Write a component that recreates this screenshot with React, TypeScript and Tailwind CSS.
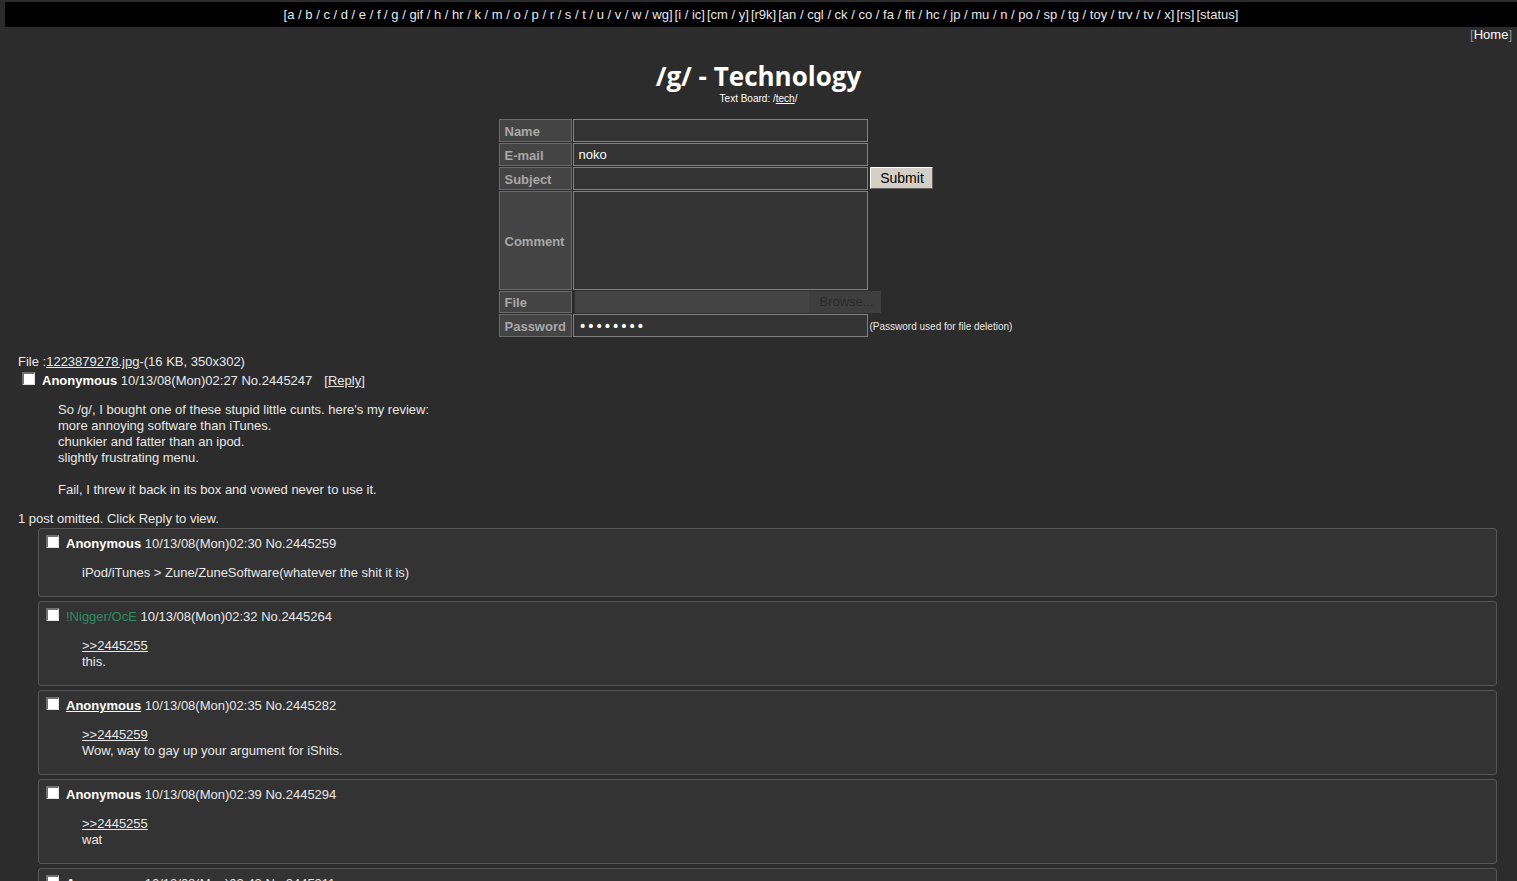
import React from "react";

const boardGroups: string[][] = [
  ["a", "b", "c", "d", "e", "f", "g", "gif", "h", "hr", "k", "m", "o", "p", "r", "s", "t", "u", "v", "w", "wg"],
  ["i", "ic"],
  ["cm", "y"],
  ["r9k"],
  ["an", "cgl", "ck", "co", "fa", "fit", "hc", "jp", "mu", "n", "po", "sp", "tg", "toy", "trv", "tv", "x"],
  ["rs"],
  ["status"],
];

type Post = {
  id: string;
  name: string;
  time: string;
  trip?: boolean;
  email?: boolean;
  quote?: string;
  text: string;
};

const replies: Post[] = [
  { id: "2445259", name: "Anonymous", time: "02:30", text: "iPod/iTunes > Zune/ZuneSoftware(whatever the shit it is)" },
  { id: "2445264", name: "!Nigger/OcE", trip: true, time: "02:32", quote: "2445255", text: "this." },
  { id: "2445282", name: "Anonymous", email: true, time: "02:35", quote: "2445259", text: "Wow, way to gay up your argument for iShits." },
  { id: "2445294", name: "Anonymous", time: "02:39", quote: "2445255", text: "wat" },
  { id: "2445311", name: "Anonymous", time: "02:43", text: "" },
];

function BoardNav() {
  return (
    <nav aria-label="Boards" className="ml-[5px] flex flex-wrap justify-center gap-x-0.5 bg-black py-1 leading-[17px]">
      {boardGroups.map((group) => (
        <span key={group[0]}>
          [
          {group.map((b, i) => (
            <React.Fragment key={b}>
              {i > 0 && " / "}
              <a href={`#${b}`}>{b}</a>
            </React.Fragment>
          ))}
          ]
        </span>
      ))}
    </nav>
  );
}

function Row({ id, label, size, children }: { id: string; label: string; size: string; children: React.ReactNode }) {
  return (
    <div className="flex gap-px">
      <label
        htmlFor={id}
        className={`flex w-[73px] items-center border border-[#6a6a6a] bg-[#444444] pt-0.5 pl-[5px] font-bold text-[#a8a8a8] ${size}`}
      >
        {label}
      </label>
      {children}
    </div>
  );
}

const field = "w-[295px] border border-[#808080] bg-[#333333] px-[5px] text-white outline-none";

function PostForm() {
  return (
    <form className="mx-auto mt-3.5 flex w-[520px] flex-col gap-px" onSubmit={(e) => e.preventDefault()}>
      <Row id="name" label="Name" size="h-[23px]">
        <input id="name" type="text" className={field} />
      </Row>
      <Row id="email" label="E-mail" size="h-[23px]">
        <input id="email" type="text" defaultValue="noko" className={field} />
      </Row>
      <Row id="subject" label="Subject" size="h-[23px]">
        <input id="subject" type="text" className={field} />
        <button
          type="submit"
          className="ml-px h-[22px] w-[63px] border border-t-white border-r-[#606060] border-b-[#606060] border-l-white bg-[#d4d0c8] pl-0.5 text-[14px] leading-[18px] text-black"
        >
          Submit
        </button>
      </Row>
      <Row id="comment" label="Comment" size="h-[99px]">
        <textarea id="comment" className={`${field} resize-none`} />
      </Row>
      <Row id="file" label="File" size="h-[22px]">
        <div className="relative ml-0.5 flex w-[306px] items-center justify-end bg-[#444444] text-[#2b2b2b]">
          <span className="flex h-full w-[72px] items-center bg-[#3e3e3e] pl-[11px]">Browse...</span>
          <input id="file" type="file" className="absolute inset-0 w-full opacity-0" />
        </div>
      </Row>
      <Row id="password" label="Password" size="h-[23px]">
        <input
          id="password"
          type="password"
          defaultValue="password"
          className={`${field} font-['DejaVu_Sans',sans-serif] text-[14px]`}
        />
        <small className="ml-px flex items-center pt-0.5 text-[10px] whitespace-nowrap">(Password used for file deletion)</small>
      </Row>
    </form>
  );
}

function PostHeader({ post, children }: { post: Post; children?: React.ReactNode }) {
  const nameStyle = post.trip ? "text-[#2e8b62]" : "font-bold text-white";
  return (
    <div className="flex items-start">
      <input
        type="checkbox"
        aria-label={`Select post ${post.id}`}
        className="mr-[7px] size-[13px] appearance-none border-t-2 border-r border-b border-l-2 border-t-[#707070] border-r-[#e0e0e0] border-b-[#e0e0e0] border-l-[#707070] bg-white"
      />
      <p className="pt-px">
        {post.email ? (
          <a href="#mail" className={`${nameStyle} underline`}>{post.name}</a>
        ) : (
          <span className={nameStyle}>{post.name}</span>
        )}{" "}
        10/13/08(Mon){post.time} No.{post.id}
        {children}
      </p>
    </div>
  );
}

function Reply({ post }: { post: Post }) {
  return (
    <article className="rounded-[3px] border border-[#555555] bg-[#333333] px-[7px] pt-1.5 pb-[15px]">
      <PostHeader post={post} />
      <div className="mt-[13px] min-h-4 pl-9">
        {post.quote && (
          <a href={`#${post.quote}`} className="block w-fit underline">
            &gt;&gt;{post.quote}
          </a>
        )}
        {post.text}
      </div>
    </article>
  );
}

export default function App() {
  return (
    <div className="min-h-screen bg-[#2c2c2c] pt-0.5 font-['Liberation_Sans',Arial,sans-serif] text-[13px] leading-4 text-[#e8e8e8]">
      <BoardNav />
      <div className="pr-[5px] text-right text-[#909090]">
        [<a href="#home" className="text-white">Home</a>]
      </div>
      <header className="mt-4 text-center text-white">
        <h1 className="font-['Open_Sans',Tahoma,sans-serif] text-[26px] leading-[34px] font-bold">/g/ - Technology</h1>
        <p className="text-[10px] leading-3">
          Text Board: /<a href="#tech" className="underline">tech</a>/
        </p>
      </header>
      <PostForm />
      <main className="mt-[17px] pr-5 pl-[18px]">
        <p>
          File :<a href="#file" className="underline">1223879278.jpg</a>-(16 KB, 350x302)
        </p>
        <div className="mt-0.5 pl-1">
          <PostHeader post={{ id: "2445247", name: "Anonymous", time: "02:27", text: "" }}>
            <span className="ml-3">
              [<a href="#reply" className="underline">Reply</a>]
            </span>
          </PostHeader>
        </div>
        <p className="mt-[13px] pl-10">
          So /g/, I bought one of these stupid little cunts. here's my review:
          <br />
          more annoying software than iTunes.
          <br />
          chunkier and fatter than an ipod.
          <br />
          slightly frustrating menu.
          <br />
          <br />
          Fail, I threw it back in its box and vowed never to use it.
        </p>
        <p className="mt-[13px]">1 post omitted. Click Reply to view.</p>
        <div className="mt-px flex flex-col gap-1 pl-5">
          {replies.map((post) => (
            <Reply key={post.id} post={post} />
          ))}
        </div>
      </main>
    </div>
  );
}
